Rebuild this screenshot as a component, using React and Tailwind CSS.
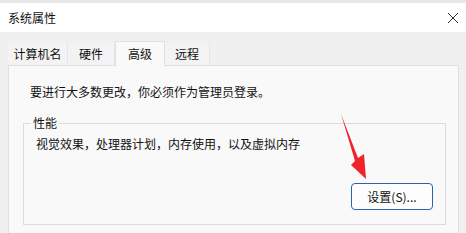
import React from "react";

const tabs = [
  { label: "计算机名", width: "w-[60px]" },
  { label: "硬件", width: "w-[47px]" },
  { label: "高级", width: "w-[50px]", active: true },
  { label: "远程", width: "w-[45px]" },
];

function Tab({ label, width, active }) {
  if (active) {
    return (
      <div
        className={`${width} h-[25px] -mb-px flex items-center justify-center bg-[#f9f9f9] border border-b-0 border-[#e0e0e0] relative z-10`}
      >
        {label}
      </div>
    );
  }
  return (
    <div
      className={`${width} h-[22px] flex items-center justify-center bg-[#f3f3f3] border-r border-[#e6e6e6]`}
    >
      {label}
    </div>
  );
}

export default function App() {
  return (
    <div
      className="w-[466px] h-[233px] overflow-hidden bg-[#f0f0f0] text-[12px] leading-[16px] text-[#111] flex flex-col"
      style={{ fontFamily: '"Noto Sans CJK SC", "Noto Sans", sans-serif' }}
    >
      <div className="h-[3px] bg-[#e8e8e8]" />
      <div className="h-[29px] bg-white flex items-center justify-between pl-[8px] pr-[6px]">
        <span>系统属性</span>
        <svg width="12" height="12" viewBox="0 0 12 12" className="mr-[1px]">
          <path d="M1 1 L11 11 M11 1 L1 11" stroke="#333" strokeWidth="1" />
        </svg>
      </div>

      <div className="flex-1 flex flex-col pl-[8px] pr-[7px] pt-[9px]">
        <div className="flex items-end">
          {tabs.map((t) => (
            <Tab key={t.label} {...t} />
          ))}
        </div>

        <div className="flex-1 bg-[#f9f9f9] border border-b-0 border-[#e0e0e0] pt-[18px] pl-[14px] pr-[12px] relative">
          <p className="pl-[7px]">要进行大多数更改，你必须作为管理员登录。</p>

          <div className="mt-[23px] relative border border-[#dcdcdc] pl-[12px] pr-[12px] pt-[12px] pb-[14px]">
            <span className="absolute left-[7px] -top-[9px] px-[2px] bg-[#f9f9f9]">
              性能
            </span>
            <p>视觉效果，处理器计划，内存使用，以及虚拟内存</p>
            <div className="flex justify-end mt-[31px]">
              <button className="w-[82px] h-[27px] rounded-[4px] border border-[#2b64a8] bg-[#fdfdfd] flex items-center justify-center">
                设置(S)...
              </button>
            </div>
          </div>

          <svg
            className="absolute left-[331px] top-[47px]"
            width="30"
            height="68"
            viewBox="0 0 30 68"
          >
            <polygon
              points="1,1 18,45 24,41 26,66 11,52 15,48"
              fill="#f0232b"
            />
          </svg>
        </div>
      </div>
    </div>
  );
}
